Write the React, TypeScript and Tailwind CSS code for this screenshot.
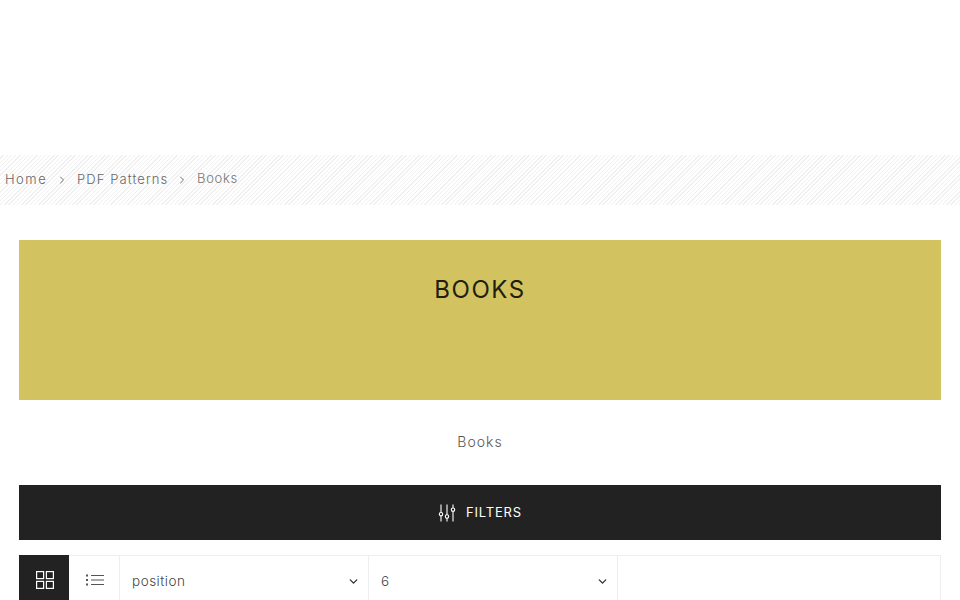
import { ChevronRight, ChevronDown } from "lucide-react";

function FilterIcon() {
  return (
    <svg width="18" height="18" viewBox="0 0 18 18" fill="none" stroke="currentColor" strokeWidth="1.1">
      <path d="M3 0.5v8M3 12v5.5M9 0.5v10.500M9 14v3.500M15 0.500v3.500M15 7.500v10" />
      <circle cx="3" cy="10.200" r="1.700" />
      <circle cx="9" cy="12.500" r="1.700" />
      <circle cx="15" cy="5.700" r="1.700" />
    </svg>
  );
}

function GridIcon() {
  return (
    <svg width="18" height="18" viewBox="0 0 18 18" fill="none" stroke="currentColor" strokeWidth="1.200">
      <rect x="0.600" y="0.600" width="7" height="7" />
      <rect x="10.400" y="0.600" width="7" height="7" />
      <rect x="0.600" y="10.400" width="7" height="7" />
      <rect x="10.400" y="10.400" width="7" height="7" />
    </svg>
  );
}

function ListIcon() {
  return (
    <svg width="18" height="12" viewBox="0 0 18 12" fill="none" stroke="currentColor" strokeWidth="1">
      <path d="M5 1.500h13M5 6h13M5 10.500h13" />
      <path d="M0 1.500h2M0 6h2M0 10.500h2" strokeWidth="2" />
    </svg>
  );
}

function SelectBox({ label, wide }: { label: string; wide?: boolean }) {
  return (
    <div className={`flex h-full w-[249px] items-center justify-between border-r border-[#eeeeee] pl-3 pr-[8px] text-[13.500px] font-light text-[#444444] ${wide ? "tracking-[0.5px]" : ""}`}>
      <span>{label}</span>
      <ChevronDown size={13} strokeWidth={2.500} className="text-[#333333]" />
    </div>
  );
}

export default function App() {
  return (
    <div className="h-[600px] overflow-hidden bg-white font-['Inter',sans-serif]">
      <div className="h-[155px]" />

      <div className="flex h-[50px] items-center bg-[repeating-linear-gradient(135deg,#ffffff_0px,#ffffff_2px,#f0f0f0_2px,#f0f0f0_3px)] pl-[5px] text-[13px] font-light tracking-[1.100px] whitespace-nowrap text-[#666666]">
        <span className="w-[42px] tracking-[1.500px]">Home</span>
        <ChevronRight size={12} strokeWidth={1.500} className="mx-[9px] text-[#444444]" />
        <span className="w-[90px]">PDF Patterns</span>
        <ChevronRight size={12} strokeWidth={1.500} className="mx-[9px] text-[#444444]" />
        <span className="-translate-y-px tracking-[0.7px] text-[#777777]">Books</span>
      </div>

      <div className="mt-[35px] px-[19px]">
        <div className="flex h-[160px] justify-center bg-[#d2c360] pt-[33px]">
          <h1 className="text-[24px] leading-[34px] font-normal tracking-[1.600px] text-[#221e10]">BOOKS</h1>
        </div>

        <p className="mt-[32px] text-center text-[14px] leading-[20px] font-light tracking-[1px] text-[#555555]">Books</p>

        <div className="mt-[33px] flex h-[55px] items-center justify-center gap-[10px] bg-[#222222] text-white">
          <FilterIcon />
          <span className="text-[13px] font-normal tracking-[0.800px]">FILTERS</span>
        </div>

        <div className="mt-[15px] flex h-[60px] border border-l-0 border-[#eeeeee]">
          <div className="-mt-px flex h-[61px] w-[50px] items-start justify-center bg-[#222222] pt-4 pl-0.5 text-white">
            <GridIcon />
          </div>
          <div className="flex w-[51px] items-start justify-center border-r border-[#eeeeee] pt-[18px] pl-0.5 text-[#555555]">
            <ListIcon />
          </div>
          <div className="flex h-[50px]">
            <SelectBox label="position" wide />
            <SelectBox label="6" />
          </div>
        </div>
      </div>
    </div>
  );
}
